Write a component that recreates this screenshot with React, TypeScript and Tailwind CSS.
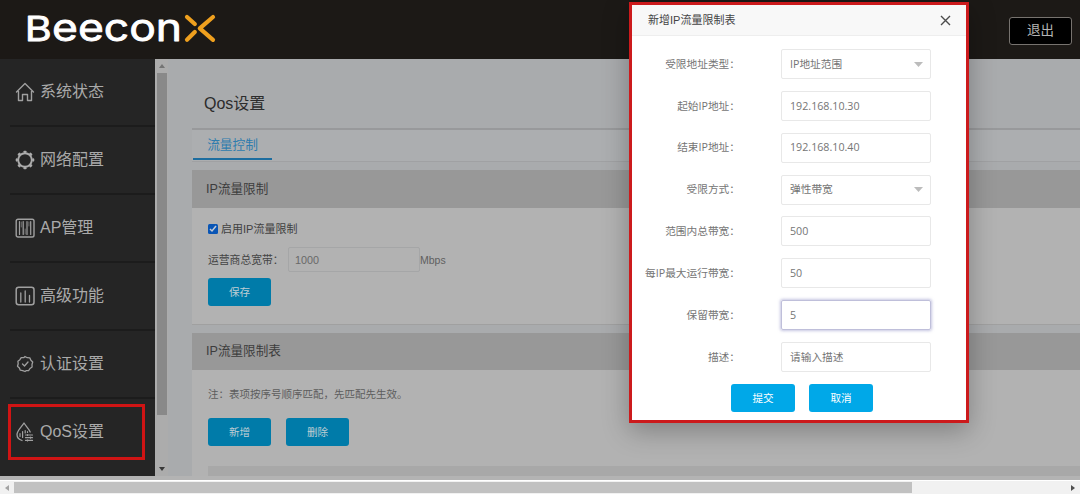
import React from "react";

const cjk = "font-['Liberation_Sans','Noto_Sans_CJK_SC',sans-serif]";
const modalFont = "font-['Open_Sans','Noto_Sans_CJK_SC',sans-serif]";

function Logo() {
  return (
    <svg width="200" height="59" viewBox="0 0 200 59" className="ml-[20px] block">
      <g fill="#fff" stroke="#fff" strokeWidth=".8" strokeLinejoin="round" fontFamily="Inter, sans-serif" fontWeight="400">
        <text x="4.800" y="41" fontSize="34.500" textLength="27" lengthAdjust="spacingAndGlyphs">B</text>
        <text x="32" y="41" fontSize="37.500" textLength="130" lengthAdjust="spacingAndGlyphs">eecon</text>
      </g>
      <g stroke="#efa01e" strokeWidth="4.200" strokeLinecap="round" strokeLinejoin="round" fill="none">
        <path d="M167 17 174.800 24M167 39.800 174.800 32" />
        <path d="M193 17 179.800 28.400 193 39.800" />
      </g>
    </svg>
  );
}

const stroke = { fill: "none", stroke: "#a0a0a0", strokeWidth: 1.4, strokeLinecap: "round", strokeLinejoin: "round" } as const;

function HomeIcon() {
  return (
    <svg width="20" height="20" viewBox="0 0 20 20" {...stroke} strokeWidth={1.4}>
      <path d="M1.500 10 10 1.500l8.500 8.500M3.500 9.500v9h4v-6h5v6h4v-9" />
    </svg>
  );
}

function GearIcon() {
  return (
    <svg width="20" height="20" viewBox="0 0 20 20" fill="none" stroke="#acacac">
      <circle cx="10" cy="10" r="6.800" strokeWidth="1.900" />
      {[0, 45, 90, 135, 180, 225, 270, 315].map((a) => (
        <path key={a} d="M9.400 1.800h1.200" strokeWidth="2.200" strokeLinecap="round" transform={`rotate(${a} 10 10)`} />
      ))}
    </svg>
  );
}

function ApIcon() {
  return (
    <svg width="20" height="20" viewBox="0 0 20 20" {...stroke}>
      <rect x="1.200" y="1.200" width="17.800" height="17.800" rx="1.800" />
      <path d="M4.500 3.500v13M8.200 3.500v13M12 3.500v13M15.700 3.500v13" strokeWidth="1.200" />
      <path d="M6.300 4v5M10.200 11v5M13.900 4v4" strokeWidth=".6" />
    </svg>
  );
}

function ChartIcon() {
  return (
    <svg width="20" height="20" viewBox="0 0 20 20" {...stroke}>
      <rect x="1.200" y="1.200" width="17.800" height="17.600" rx="2.500" strokeWidth="1.500" />
      <path d="M5.800 7v9M10.200 5v11M14.500 9.500V16" strokeWidth="1.300" />
    </svg>
  );
}

function BadgeIcon() {
  return (
    <svg width="20" height="20" viewBox="0 0 20 20" {...stroke} strokeWidth={1.3}>
      <path d="M10 2.500 12.200 3.700 14.800 3.900 15.900 6.200 17.700 8 17 10.500 17.100 13 15 14.500 13.600 16.600 11.100 16.700 10 17.500 7.700 16.600 5.300 16.200 4.400 13.900 2.500 12.200 3.200 9.800 2.900 7.200 4.900 5.700 6.200 3.600 8.700 3.700Z" />
      <path d="m7.500 10 2 2L13 8" />
    </svg>
  );
}

function QosIcon() {
  return (
    <svg width="20" height="20" viewBox="0 0 20 20" {...stroke} strokeWidth={1.3}>
      <path d="M7 18.500C4 17.600 2 15.400 2 12.500 2 8.800 6.500 5 9 1c2.200 3.600 5 6 6.200 9" />
      <path d="M5 11.500v3M7.600 9.500v6M10.200 8.500v2.500M12.500 9.500v1" strokeWidth="1.200" />
      <path d="M10.500 13h7M10.500 15.700h7M10.500 18.400h7M12.500 12.500v1M15.500 15.200v1M12.500 17.900v1" strokeWidth="1.200" />
    </svg>
  );
}

const menu = [
  { label: "系统状态", Icon: HomeIcon },
  { label: "网络配置", Icon: GearIcon },
  { label: "AP管理", Icon: ApIcon },
  { label: "高级功能", Icon: ChartIcon },
  { label: "认证设置", Icon: BadgeIcon },
  { label: "QoS设置", Icon: QosIcon },
];

function Sidebar() {
  return (
    <nav className="relative h-[417px] w-[155px] shrink-0 overflow-hidden bg-[#252525]">
      {menu.map(({ label, Icon }) => (
        <div key={label} className="ml-[10px] flex h-[68px] items-center border-b-2 border-[#1c1c1c] pl-[5px] last-of-type:border-[#252525] nth-[6]:border-[#252525]">
          <Icon />
          <span className="ml-[5px] text-[16px] leading-none text-[#aaa]">{label}</span>
        </div>
      ))}
      <div className="absolute left-[8px] top-[345px] h-[56px] w-[137px] border-[3px] border-[#d01414]" />
    </nav>
  );
}

function Button({ children, bright = false }: { children: React.ReactNode; bright?: boolean }) {
  return (
    <button
      className={`flex h-[28px] items-center justify-center rounded-[3px] text-[10.6px] leading-none ${
        bright ? "w-[64px] bg-[#00a8e8] text-white" : "w-[63px] bg-[#007ba9] text-[#bfcdd3]"
      }`}
    >
      {children}
    </button>
  );
}

function VerticalScrollbar() {
  return (
    <div className="flex h-[417px] w-[13px] shrink-0 flex-col items-center bg-[#acacac]">
      <div className="flex h-[14px] items-center">
        <svg width="6" height="4" viewBox="0 0 6 4"><path d="M0 4 3 0l3 4z" fill="#747474" /></svg>
      </div>
      <div className="ml-[1px] h-[342px] w-[10px] bg-[#898989]" />
      <div className="mt-auto flex h-[14px] items-center">
        <svg width="6" height="4" viewBox="0 0 6 4"><path d="M0 0h6L3 4z" fill="#383838" /></svg>
      </div>
    </div>
  );
}

function Content() {
  return (
    <main className="flex h-[417px] min-w-0 flex-1 flex-col overflow-hidden bg-[#a9abad] pl-[24px]">
      <div className="flex h-[71px] shrink-0 items-center border-b-2 border-[#98999b] pl-[12px] pt-[21px]">
        <h1 className="text-[16px] leading-none text-[#2c2c2c]">Qos设置</h1>
      </div>
      <div className="h-[32px] shrink-0 border-b border-[#a0a1a3] bg-[#acaeb0] pl-[1px]">
        <div className="flex h-[30px] w-[79px] items-center justify-center border-b-2 border-[#1d6d9f] pt-[2px] text-[12.700px] leading-none text-[#2e7cae]">
          流量控制
        </div>
      </div>
      <section className="mt-[8px] h-[155px] shrink-0 border-b border-[#a0a0a0] bg-[#b2b2b2]">
        <h2 className="flex h-[38px] items-center bg-[#989898] pl-[14px] text-[12.600px] leading-none text-[#3d3d3d]">IP流量限制</h2>
        <div className="pl-[16px] pt-[15px]">
          <label className="flex h-[12px] items-center text-[11px] leading-none text-[#414141]">
            <span className="mr-[3px] flex h-[10px] w-[10px] items-center justify-center rounded-[1.500px] bg-[#0955b5]">
              <svg width="8" height="8" viewBox="0 0 8 8" fill="none" stroke="#c4cbd5" strokeWidth="1.500"><path d="m1 4 2 2 4-5" /></svg>
            </span>
            启用IP流量限制
          </label>
          <div className="mt-[12px] flex h-[25px] items-center text-[10.800px] leading-none text-[#444]">
            <span className="w-[80px] pt-[2px]">运营商总宽带：</span>
            <span className="flex h-[25px] w-[132px] items-center rounded-[2px] border border-[#a5a6a7] pl-[6px] pt-[2px] text-[#686868]">1000</span>
            <span className="pt-[2px] text-[10.500px] text-[#606060]">Mbps</span>
          </div>
          <div className="mt-[6px]"><Button>保存</Button></div>
        </div>
      </section>
      <section className="mt-[8px] h-[144px] shrink-0 bg-[#b2b2b2]">
        <h2 className="flex h-[37px] items-center bg-[#989898] pl-[14px] text-[12.600px] leading-none text-[#3d3d3d]">IP流量限制表</h2>
        <div className="pl-[16px] pt-[18px]">
          <p className="text-[10.500px] leading-[12px] text-[#5d5d5d]">注：表项按序号顺序匹配，先匹配先生效。</p>
          <div className="mt-[18px] flex gap-[15px]">
            <Button>新增</Button>
            <Button>删除</Button>
          </div>
          <div className="mt-[20px] flex h-[11px] items-end bg-[#a8a8a8] pl-[13px]">
            <span className="h-[1px] w-[10px] bg-[#999]" />
          </div>
        </div>
      </section>
    </main>
  );
}

const fields = [
  { label: "受限地址类型：", value: "IP地址范围", select: true },
  { label: "起始IP地址：", value: "192.168.10.30" },
  { label: "结束IP地址：", value: "192.168.10.40" },
  { label: "受限方式：", value: "弹性带宽", select: true },
  { label: "范围内总带宽：", value: "500" },
  { label: "每IP最大运行带宽：", value: "50" },
  { label: "保留带宽：", value: "5", focus: true },
  { label: "描述：", value: "请输入描述" },
];

function Modal() {
  return (
    <div className="absolute left-[629px] top-[2px] h-[421px] w-[340px] border-[3px] border-[#cc1a1c] bg-white shadow-[0_8px_25px_rgba(0,0,0,0.28)]">
      <div className="flex h-[31px] items-center justify-between border-b border-[#eee] bg-[#f8f8f8] pl-[16px] pr-[15px]">
        <span className="text-[11px] leading-none text-[#444]">新增IP流量限制表</span>
        <svg className="mt-[1px]" width="11" height="11" viewBox="0 0 11 11" fill="none" stroke="#4c4c4c" strokeWidth="1.400"><path d="m1 1 9 9M10 1l-9 9" /></svg>
      </div>
      <div className={`mt-[13px] flex flex-col gap-[11.860px] text-[10.700px] leading-none ${modalFont}`}>
        {fields.map((f) => (
          <div key={f.label} className="flex h-[30px] items-center">
            <span className="w-[108px] text-right text-[#757575]">{f.label}</span>
            <span
              className={`ml-[41px] flex h-[30px] w-[150px] items-center justify-between rounded-[2px] border pl-[8px] pr-[7px] text-[#757575] ${
                f.focus ? "border-[#bfbfda] shadow-[0_0_3px_1px_rgba(150,150,200,0.55)]" : "border-[#e8e8e8]"
              }`}
            >
              {f.value}
              {f.select && <svg width="9" height="5" viewBox="0 0 9 5"><path d="M0 0h9L4.500 5z" fill="#bcbcbc" /></svg>}
            </span>
          </div>
        ))}
      </div>
      <div className="mt-[12px] flex gap-[14px] pl-[99px]">
        <Button bright>提交</Button>
        <Button bright>取消</Button>
      </div>
    </div>
  );
}

export default function App() {
  return (
    <div className={`relative flex h-[494px] w-[1080px] flex-col overflow-hidden bg-[#b3b3b3] ${cjk}`}>
      <header className="flex h-[59px] shrink-0 items-center justify-between bg-[#1c1916] pr-[8px]">
        <Logo />
        <button className="mt-[2px] flex h-[28px] w-[63px] items-center justify-center rounded-[3px] border border-[#77736f] bg-black text-[13.500px] leading-none text-[#b5b5b5]">
          退出
        </button>
      </header>
      <div className="flex h-[417px] shrink-0">
        <Sidebar />
        <VerticalScrollbar />
        <Content />
      </div>
      <div className="mt-[4px] flex h-[14px] shrink-0 items-center border-t border-white bg-[#f1f1f1]">
        <div className="flex w-[14px] justify-center">
          <svg width="4" height="6" viewBox="0 0 4 6"><path d="M4 0v6L0 3z" fill="#a3a3a3" /></svg>
        </div>
        <div className="h-[11px] w-[898px] bg-[#c1c1c1]" />
        <svg className="ml-auto mr-[5px]" width="4" height="6" viewBox="0 0 4 6"><path d="M0 0v6l4-3z" fill="#505050" /></svg>
      </div>
      <Modal />
    </div>
  );
}
